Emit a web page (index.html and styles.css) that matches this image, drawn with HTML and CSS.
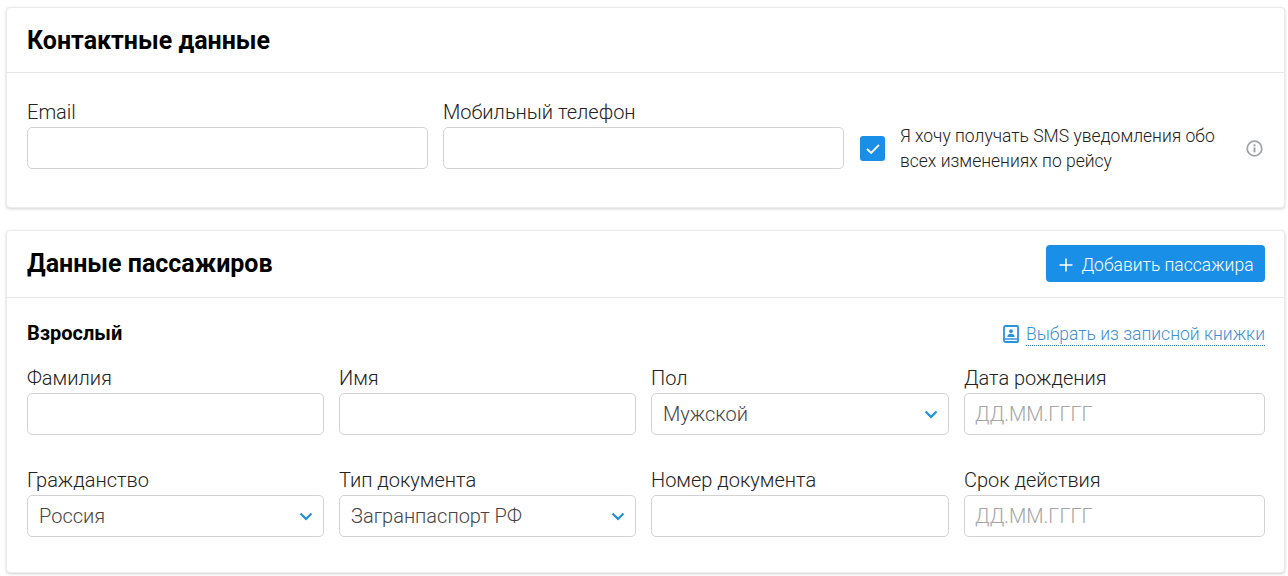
FILE: index.html
```html
<!DOCTYPE html>
<html lang="ru">
<head>
<meta charset="utf-8">
<title>Контактные данные</title>
<link rel="stylesheet" href="styles.css">
</head>
<body>
<section class="card card-contacts">
  <header class="card-head head-contacts"><h2>Контактные данные</h2></header>
  <div class="contact-body">
    <label class="field"><span class="lbl">Email</span><span class="box"></span></label>
    <label class="field"><span class="lbl">Мобильный телефон</span><span class="box"></span></label>
    <div class="sms">
      <span class="check"><svg width="16" height="12" viewBox="0 0 14 11"><path d="M1.500 5.500l3.800 3.600L12.500 1.800" fill="none" stroke="#fff" stroke-width="1.700"/></svg></span>
      <p>Я хочу получать SMS уведомления обо всех изменениях по рейсу</p>
      <svg class="info" width="17" height="17" viewBox="0 0 17 17"><circle cx="8.500" cy="8.500" r="7.300" fill="none" stroke="#9ea3a8" stroke-width="1.700"/><rect x="7.500" y="7.400" width="2" height="5" fill="#9ea3a8"/><rect x="7.500" y="4.300" width="2" height="2" fill="#9ea3a8"/></svg>
    </div>
  </div>
</section>
<section class="card card-pass">
  <header class="card-head head-pass">
    <h2>Данные пассажиров</h2>
    <button class="add" type="button"><svg width="14" height="14" viewBox="0 0 14 14"><path d="M7 .5v13M.5 7h13" stroke="#fff" stroke-width="1.500" fill="none"/></svg>Добавить пассажира</button>
  </header>
  <div class="pass-body">
    <div class="pass-top">
      <h3>Взрослый</h3>
      <a class="book"><svg width="16" height="18" viewBox="0 0 16 18"><path d="M2.500 1h11.500a1 1 0 0 1 1 1v14.500a.5.5 0 0 1-.5.5H2.500A1.500 1.500 0 0 1 1 15.500V2.500A1.500 1.500 0 0 1 2.500 1z" fill="none" stroke="#2a93dc" stroke-width="1.800"/><path d="M1.500 14h13" stroke="#2a93dc" stroke-width="1.500"/><circle cx="8" cy="6.200" r="1.900" fill="#2a93dc"/><path d="M4.300 12c0-2.300 1.600-3.300 3.700-3.300s3.700 1 3.700 3.300z" fill="#2a93dc"/></svg><span>Выбрать из записной книжки</span></a>
    </div>
    <div class="grid">
      <label class="field"><span class="lbl">Фамилия</span><span class="box"></span></label>
      <label class="field"><span class="lbl">Имя</span><span class="box"></span></label>
      <label class="field"><span class="lbl">Пол</span><span class="box sel">Мужской<svg class="chev" width="14" height="9" viewBox="0 0 14 9"><path d="M1.500 1.500L7 7l5.500-5.500" fill="none" stroke="#1e90e0" stroke-width="2.200"/></svg></span></label>
      <label class="field"><span class="lbl">Дата рождения</span><span class="box ph">ДД.ММ.ГГГГ</span></label>
      <label class="field"><span class="lbl">Гражданство</span><span class="box sel">Россия<svg class="chev" width="14" height="9" viewBox="0 0 14 9"><path d="M1.500 1.500L7 7l5.500-5.500" fill="none" stroke="#1e90e0" stroke-width="2.200"/></svg></span></label>
      <label class="field"><span class="lbl">Тип документа</span><span class="box sel">Загранпаспорт РФ<svg class="chev" width="14" height="9" viewBox="0 0 14 9"><path d="M1.500 1.500L7 7l5.500-5.500" fill="none" stroke="#1e90e0" stroke-width="2.200"/></svg></span></label>
      <label class="field"><span class="lbl">Номер документа</span><span class="box"></span></label>
      <label class="field"><span class="lbl">Срок действия</span><span class="box ph">ДД.ММ.ГГГГ</span></label>
    </div>
  </div>
</section>
</body>
</html>
```
FILE: styles.css
```css
* { box-sizing: border-box; }
html, body { margin: 0; height: 576px; overflow: hidden; }
body {
  padding: 7px 3px 0 6px;
  background: #fff;
  font-family: Roboto, "Liberation Sans", sans-serif;
  color: #222;
}
.card {
  background: #fff;
  border: 1px solid #ebebeb;
  border-radius: 4px;
  box-shadow: 0 1px 3px rgba(0,0,0,.18);
}
.card-contacts { height: 201px; margin-bottom: 22px; }
.card-pass { height: 343px; }
.card-head {
  height: 65px;
  padding: 0 19px 0 20px;
  display: flex;
  align-items: center;
  justify-content: space-between;
  border-bottom: 1px solid #e6e6e6;
}
.head-contacts { padding-top: 2px; }
.head-pass { height: 67px; }
h2 { margin: 0; font-size: 25px; line-height: 30px; font-weight: 700; color: #000; }
h3 { margin: 0; font-size: 20px; line-height: 24px; font-weight: 700; color: #000; }
.contact-body {
  display: grid;
  grid-template-columns: 401px 401px 1fr;
  gap: 15px;
  padding: 27px 20px 0;
}
.field { display: flex; flex-direction: column; }
.lbl { font-size: 20px; line-height: 24px; margin-bottom: 3px; font-weight: 300; color: #222; }
.box {
  position: relative;
  display: block;
  height: 42px;
  padding: 0 11px;
  border: 1px solid #d2d2d2;
  border-radius: 5px;
  font-size: 20px;
  line-height: 41px;
  font-weight: 300;
  color: #444;
}
.ph { padding-left: 10px; color: #a5a5a5; }
.chev { position: absolute; right: 10px; top: 16px; }
.sms {
  display: flex;
  align-items: center;
  padding-top: 9px;
  height: 79px;
}
.check {
  flex: none;
  width: 25px;
  height: 25px;
  margin: 9px 15px 0 1px;
  border-radius: 3px;
  background: #1a8fe8;
  display: flex;
  align-items: center;
  justify-content: center;
}
.sms p {
  margin: 9px 0 0;
  width: 330px;
  font-size: 17.500px;
  line-height: 25px;
  font-weight: 300;
  color: #222;
}
.info { flex: none; margin: 9px 1px 0 auto; }
.add {
  width: 219px;
  height: 37px;
  margin-top: -2px;
  padding: 3px 0 0 2px;
  border: 0;
  border-radius: 4px;
  background: #1a8fe8;
  color: #fff;
  font: 300 17.500px Roboto, sans-serif;
  display: flex;
  align-items: center;
  justify-content: center;
  gap: 8px;
}
.pass-body { padding: 22px 19px 0 20px; }
.pass-top { display: flex; justify-content: space-between; align-items: center; height: 26px; }
.book { display: flex; align-items: center; gap: 7px; margin-top: 2px; color: #3d8fd6; font-size: 17.500px; font-weight: 300; }
.book span { border-bottom: 1px dotted #2a80c8; line-height: 22px; }
.grid {
  display: grid;
  grid-template-columns: 297px 297px 298px 1fr;
  column-gap: 15px;
  row-gap: 33px;
  margin-top: 20px;
}
```
